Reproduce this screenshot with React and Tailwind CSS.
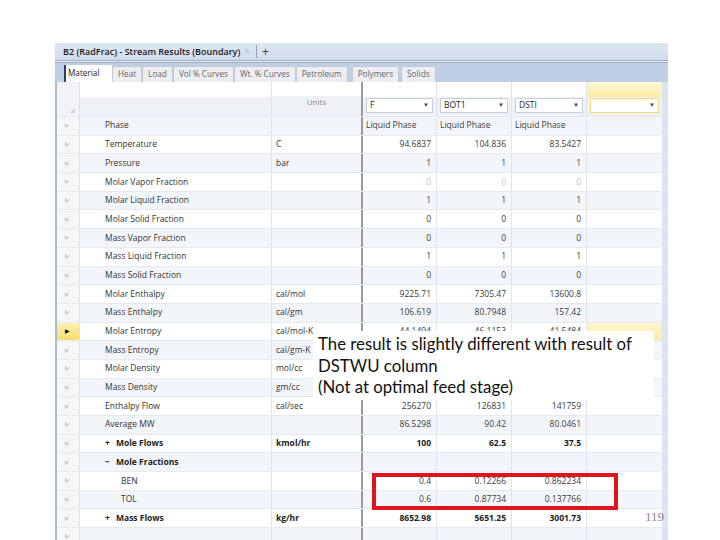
import React from 'react';

const rows = [
  { label: 'Phase', units: '', vals: ['Liquid Phase', 'Liquid Phase', 'Liquid Phase'], left: true },
  { label: 'Temperature', units: 'C', vals: ['94.6837', '104.836', '83.5427'] },
  { label: 'Pressure', units: 'bar', vals: ['1', '1', '1'] },
  { label: 'Molar Vapor Fraction', units: '', vals: ['0', '0', '0'], faded: true },
  { label: 'Molar Liquid Fraction', units: '', vals: ['1', '1', '1'] },
  { label: 'Molar Solid Fraction', units: '', vals: ['0', '0', '0'] },
  { label: 'Mass Vapor Fraction', units: '', vals: ['0', '0', '0'] },
  { label: 'Mass Liquid Fraction', units: '', vals: ['1', '1', '1'] },
  { label: 'Mass Solid Fraction', units: '', vals: ['0', '0', '0'] },
  { label: 'Molar Enthalpy', units: 'cal/mol', vals: ['9225.71', '7305.47', '13600.8'] },
  { label: 'Mass Enthalpy', units: 'cal/gm', vals: ['106.619', '80.7948', '157.42'] },
  { label: 'Molar Entropy', units: 'cal/mol-K', vals: ['-44.1494', '-46.1153', '-41.5484'], selected: true },
  { label: 'Mass Entropy', units: 'cal/gm-K', vals: ['', '', ''] },
  { label: 'Molar Density', units: 'mol/cc', vals: ['', '', ''] },
  { label: 'Mass Density', units: 'gm/cc', vals: ['', '', ''] },
  { label: 'Enthalpy Flow', units: 'cal/sec', vals: ['256270', '126831', '141759'] },
  { label: 'Average MW', units: '', vals: ['86.5298', '90.42', '80.0461'] },
  { label: 'Mole Flows', units: 'kmol/hr', vals: ['100', '62.5', '37.5'], bold: true, sign: '+' },
  { label: 'Mole Fractions', units: '', vals: ['', '', ''], bold: true, sign: '−' },
  { label: 'BEN', units: '', vals: ['0.4', '0.12266', '0.862234'], indent: true },
  { label: 'TOL', units: '', vals: ['0.6', '0.87734', '0.137766'], indent: true },
  { label: 'Mass Flows', units: 'kg/hr', vals: ['8652.98', '5651.25', '3001.73'], bold: true, sign: '+' },
  { label: '', units: '', vals: ['', '', ''] },
];

const tabs = ['Heat', 'Load', 'Vol % Curves', 'Wt. % Curves', 'Petroleum', 'Polymers', 'Solids'];

const Dropdown = ({ label, yellow }) => (
  <div
    className={`mx-[3px] h-[15px] flex items-center justify-between px-[3px] bg-white border ${
      yellow ? 'border-[#f5dc7a]' : 'border-[#c8cfd9]'
    }`}
  >
    <span>{label}</span>
    <span className="text-[6px] text-[#444]">▼</span>
  </div>
);

const GridRow = ({ row, index }) => {
  const alt = index % 2 === 0;
  const bg = alt ? 'bg-[#f2f6fb]' : 'bg-white';
  const valColor = row.faded ? 'text-[#c4c4c4]' : 'text-[#3a3a3a]';
  return (
    <div className={`flex h-[18.7px] ${bg} border-b border-[#e6eaf0]`}>
      <div
        className={`w-[23px] shrink-0 flex items-center pl-[8px] border-r border-[#dde2e9] ${
          row.selected ? 'bg-gradient-to-b from-[#fdf1b4] to-[#f8dc68]' : 'bg-[#f5f6f8]'
        }`}
      >
        <span className={`text-[6px] ${row.selected ? 'text-black' : 'text-[#cdcdcd]'}`}>▶</span>
      </div>
      <div
        className={`w-[192px] shrink-0 flex items-center border-r border-[#e0e4ea] ${
          row.indent ? 'pl-[41px]' : 'pl-[25px]'
        } ${row.bold ? 'font-bold text-[#222]' : 'text-[#333]'}`}
      >
        {row.sign && <span className="w-[11px] inline-block">{row.sign}</span>}
        {row.label}
      </div>
      <div
        className={`w-[91px] shrink-0 flex items-center pl-[4px] border-r-2 border-[#9a9a9a] overflow-hidden whitespace-nowrap ${
          row.bold ? 'font-bold text-[#222]' : 'text-[#333]'
        }`}
      >
        {row.units}
      </div>
      {row.vals.map((v, i) => (
        <div
          key={i}
          className={`${i === 0 ? 'w-[74px]' : 'w-[75px]'} shrink-0 flex items-center border-r border-[#e0e4ea] ${
            row.left ? 'justify-start pl-[3px]' : 'justify-end pr-[5px]'
          } ${row.bold ? 'font-bold text-[#222]' : valColor}`}
        >
          {v}
        </div>
      ))}
      <div
        className={`w-[75px] shrink-0 ${row.selected ? 'bg-gradient-to-b from-[#fff6cc] to-[#fcebaa]' : ''}`}
      ></div>
      <div className="w-[6px] shrink-0 bg-[#dbe5f1]"></div>
    </div>
  );
};

export default function App() {
  return (
    <div className="w-[720px] h-[540px] bg-white relative overflow-hidden font-['Open_Sans',sans-serif]">
      <div className="ml-[55px] pt-[43px] w-[613px] text-[8.5px]">
        {/* Title bar */}
        <div className="h-[17px] bg-gradient-to-b from-[#dde6f3] to-[#d2dcec] flex items-center pl-[8px]">
          <span className="font-semibold text-[#1b1b1b] text-[9px]">B2 (RadFrac) - Stream Results (Boundary)</span>
          <span className="ml-[4px] text-[#b8bfc9] text-[10px]">×</span>
          <span className="ml-[6px] h-[13px] border-l border-[#8fa0b8]"></span>
          <span className="ml-[5px] text-[#444] text-[12px] leading-none">+</span>
        </div>
        <div className="h-[1px] bg-[#9aabc4]"></div>
        <div className="h-[1px] bg-[#e8eef7]"></div>
        <div className="h-[1px] bg-[#9aabc4]"></div>

        {/* Tab row */}
        <div className="h-[19px] bg-[#bfcfe5] flex items-end pl-[9px] text-[8.2px]">
          <div className="h-[17px] w-[48px] bg-white border-l-2 border-[#2c3e63] flex items-center pl-[2px] text-[#222]">
            Material
          </div>
          {tabs.map((t, i) => (
            <div
              key={t}
              className={`h-[16px] flex items-center px-[5px] bg-[#eceef2] border border-b-0 border-[#c3cad5] text-[#666] ${
                i === 5 ? 'ml-[4px]' : i === 6 ? 'ml-[2px]' : ''
              }`}
            >
              {t}
            </div>
          ))}
        </div>

        {/* Grid */}
        <div className="border-l-2 border-[#aab9cf]">
          {/* Header */}
          <div className="flex h-[35px] border-b border-[#e6eaf0]">
            <div className="w-[23px] shrink-0 bg-[#f1f3f6] border-r border-[#dde2e9] flex items-end justify-end pr-[4px] pb-[3px]">
              <span className="block w-0 h-0 border-l-[5px] border-l-transparent border-b-[5px] border-b-[#cfd4da]"></span>
            </div>
            <div className="w-[192px] shrink-0 flex flex-col border-r border-[#e0e4ea]">
              <div className="h-[15px] bg-white"></div>
              <div className="flex-1 bg-[#eef2f7]"></div>
            </div>
            <div className="w-[91px] shrink-0 flex flex-col border-r-2 border-[#9a9a9a]">
              <div className="h-[15px] bg-white"></div>
              <div className="flex-1 bg-[#eef2f7] flex justify-center text-[#888] text-[8px] -mt-[1px]">Units</div>
            </div>
            {['F', 'BOT1', 'DSTI'].map((s, i) => (
              <div key={s} className={`${i === 0 ? 'w-[74px]' : 'w-[75px]'} shrink-0 flex flex-col border-r border-[#e0e4ea]`}>
                <div className="h-[15px] bg-white"></div>
                <div className="flex-1 bg-[#eef2f7] pt-[1px] text-[#222]">
                  <Dropdown label={s} />
                </div>
              </div>
            ))}
            <div className="w-[75px] shrink-0 flex flex-col">
              <div className="h-[15px] bg-gradient-to-b from-[#fff8d6] to-[#fde9a0]"></div>
              <div className="flex-1 bg-[#eef2f7] pt-[1px]">
                <Dropdown label="" yellow />
              </div>
            </div>
            <div className="w-[6px] shrink-0 bg-[#dbe5f1]"></div>
          </div>

          {rows.map((row, i) => (
            <GridRow key={i} row={row} index={i} />
          ))}
        </div>
      </div>

      {/* Annotation box */}
      <div className="absolute left-[313px] top-[331px] w-[341px] h-[69px] bg-white pl-[5px] pt-[2px] font-['Lato',sans-serif] text-[16.8px] leading-[21.5px] text-[#111]">
        <p>The result is slightly different with result of</p>
        <p>DSTWU column</p>
        <p>(Not at optimal feed stage)</p>
      </div>

      {/* Red highlight */}
      <div className="absolute left-[372px] top-[473px] w-[246px] h-[37px] border-[4px] border-[#e0141c]"></div>

      {/* Page number */}
      <div className="absolute left-[645px] top-[507px] text-[13px] text-[#8a8a8a] font-['Liberation_Serif',serif]">119</div>
    </div>
  );
}
